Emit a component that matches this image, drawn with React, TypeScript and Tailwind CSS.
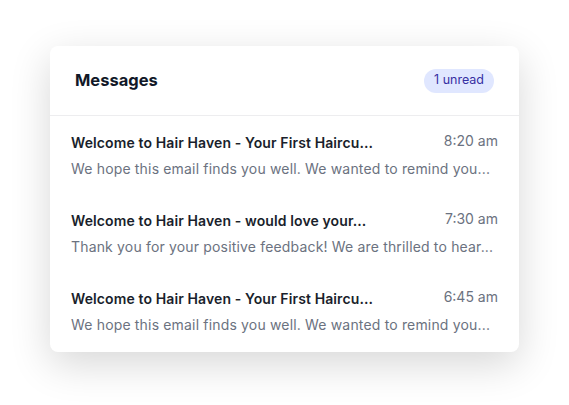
import React from "react";

const messages = [
  {
    title: "Welcome to Hair Haven - Your First Haircu...",
    preview: "We hope this email finds you well. We wanted to remind you...",
    time: "8:20 am",
  },
  {
    title: "Welcome to Hair Haven - would love your...",
    preview: "Thank you for your positive feedback! We are thrilled to hear...",
    time: "7:30 am",
  },
  {
    title: "Welcome to Hair Haven - Your First Haircu...",
    preview: "We hope this email finds you well. We wanted to remind you...",
    time: "6:45 am",
  },
];

const App: React.FC = () => {
  return (
    <div
      className="min-h-screen bg-white pt-[46px]"
      style={{ fontFamily: "Inter, 'Noto Sans', sans-serif" }}
    >
      <div className="mx-auto w-[469px] rounded-lg bg-white shadow-[0_12px_40px_rgba(0,0,0,0.16)]">
        {/* Header */}
        <div className="flex h-[70px] items-center justify-between border-b border-[#ededef] px-[25px]">
          <h2 className="text-[16.5px] font-bold text-[#111827]">Messages</h2>
          <span className="flex h-6 items-center rounded-full bg-[#e0e7ff] px-[10px] text-[12.5px] text-[#3730a3]">
            1 unread
          </span>
        </div>

        {/* List */}
        <ul>
          {messages.map((m, i) => (
            <li
              key={i}
              className={`px-[21px] pt-[17px] ${i === messages.length - 1 ? "pb-[17px]" : "pb-[15px]"}`}
            >
              <div className="flex items-start justify-between">
                <p className="text-[14px] leading-5 font-semibold tracking-[0.008em] text-[#1a1f2c]">
                  {m.title}
                </p>
                <span className="-mt-[2px] text-[14px] leading-5 text-[#6b7280]">{m.time}</span>
              </div>
              <p className="mt-[6px] text-[14px] leading-5 tracking-[0.012em] text-[#6b7280]">
                {m.preview}
              </p>
            </li>
          ))}
        </ul>
      </div>
    </div>
  );
};

export default App;
